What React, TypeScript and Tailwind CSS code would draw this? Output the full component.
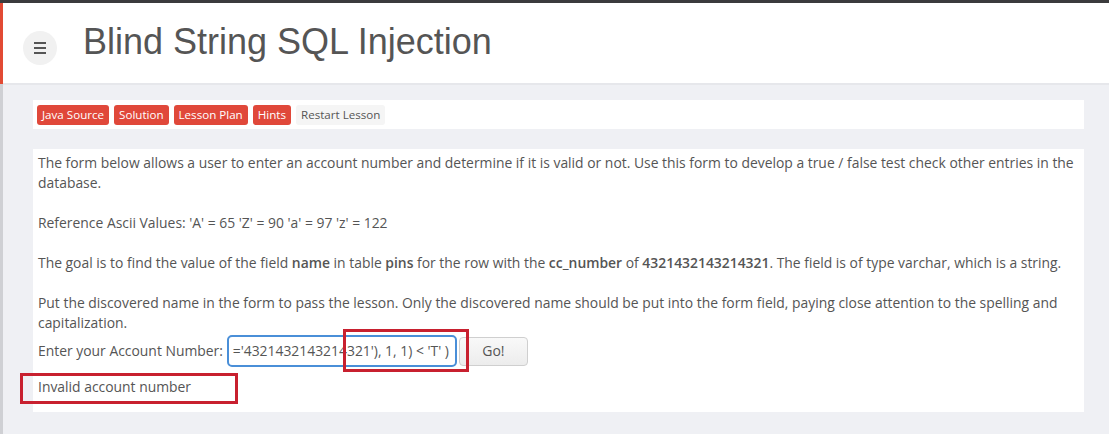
import React from 'react';

const font = { fontFamily: '"Open Sans", "DejaVu Sans", sans-serif' };

const LessonButton: React.FC<{ label: string; primary?: boolean }> = ({ label, primary }) => (
  <span
    className={`h-[20px] px-[5px] flex items-center rounded-[3px] text-[11.6px] leading-none ${
      primary ? 'bg-[#e0483a] text-white' : 'bg-[#f5f5f5] text-[#555]'
    }`}
  >
    {label}
  </span>
);

export default function App() {
  return (
    <div className="w-[1109px] h-[434px] overflow-hidden bg-[#eff0f4] flex flex-col" style={font}>
      <div className="h-[3px] bg-[#3b3b3d] shrink-0"></div>
      <div className="flex flex-1 min-h-0">
        {/* left strip */}
        <div className="w-[3px] flex flex-col shrink-0">
          <div className="h-[81px] bg-[#e24a34]"></div>
          <div className="flex-1 bg-[#cfd0d4]"></div>
        </div>
        <div className="flex-1 flex flex-col min-w-0">
          {/* header */}
          <div className="h-[82px] bg-white border-b-2 border-[#e6e7eb] flex items-center shrink-0">
            <button className="ml-[20px] w-[34px] h-[34px] rounded-full bg-[#f1f1f1] flex flex-col items-center justify-center gap-[3px] mt-[10px]">
              <span className="w-[12px] h-[2px] bg-[#555]"></span>
              <span className="w-[12px] h-[2px] bg-[#555]"></span>
              <span className="w-[12px] h-[2px] bg-[#555]"></span>
            </button>
            <h1
              className="ml-[26px] text-[36px] text-[#555] mt-[-2px]"
              style={{ fontFamily: '"Liberation Sans", Arial, sans-serif' }}
            >
              Blind String SQL Injection
            </h1>
          </div>

          <div className="pl-[30px] pr-[25px] pt-[15px]">
            {/* lesson buttons */}
            <div className="bg-white h-[29px] flex items-center gap-[5px] px-[4px]">
              <LessonButton label="Java Source" primary />
              <LessonButton label="Solution" primary />
              <LessonButton label="Lesson Plan" primary />
              <LessonButton label="Hints" primary />
              <LessonButton label="Restart Lesson" />
            </div>

            {/* lesson content */}
            <div className="relative bg-white mt-[20px] h-[263px] px-[5px] pt-[4px] text-[13.9px] leading-[20px] text-[#555]">
              <p>
                The form below allows a user to enter an account number and determine if it is valid or not. Use this form to develop a true / false test check other entries in the database.
              </p>
              <p className="mt-[20px]">Reference Ascii Values: 'A' = 65 'Z' = 90 'a' = 97 'z' = 122</p>
              <p className="mt-[20px]">
                The goal is to find the value of the field <b className="font-semibold">name</b> in table{' '}
                <b className="font-semibold">pins</b> for the row with the <b className="font-semibold">cc_number</b> of{' '}
                <b className="font-semibold">4321432143214321</b>. The field is of type varchar, which is a string.
              </p>
              <p className="mt-[20px]">
                Put the discovered name in the form to pass the lesson. Only the discovered name should be put into the form field, paying close attention to the spelling and capitalization.
              </p>
              <div className="flex items-center mt-[2px]">
                <span>Enter your Account Number:</span>
                <div className="ml-[4px] w-[230px] h-[32px] border-2 border-[#4a8fd8] rounded-[5px] flex items-center justify-end overflow-hidden pr-[6px] whitespace-nowrap">
                  <span>='4321432143214321'), 1, 1) &lt; 'T' )</span>
                </div>
                <button className="ml-[2px] w-[69px] h-[29px] border border-[#cfcfcf] rounded-[4px] bg-gradient-to-b from-[#f9f9f9] to-[#ececec] text-[#555] text-[14px]">
                  Go!
                </button>
              </div>
              <p className="mt-[10px]">Invalid account number</p>

              {/* annotation boxes */}
              <div className="absolute left-[310px] top-[180px] w-[126px] h-[43px] border-[3px] border-[#c8202f] pointer-events-none"></div>
              <div className="absolute left-[-13px] top-[224px] w-[218px] h-[31px] border-[3px] border-[#c8202f] pointer-events-none"></div>
            </div>
          </div>
        </div>
      </div>
    </div>
  );
}
